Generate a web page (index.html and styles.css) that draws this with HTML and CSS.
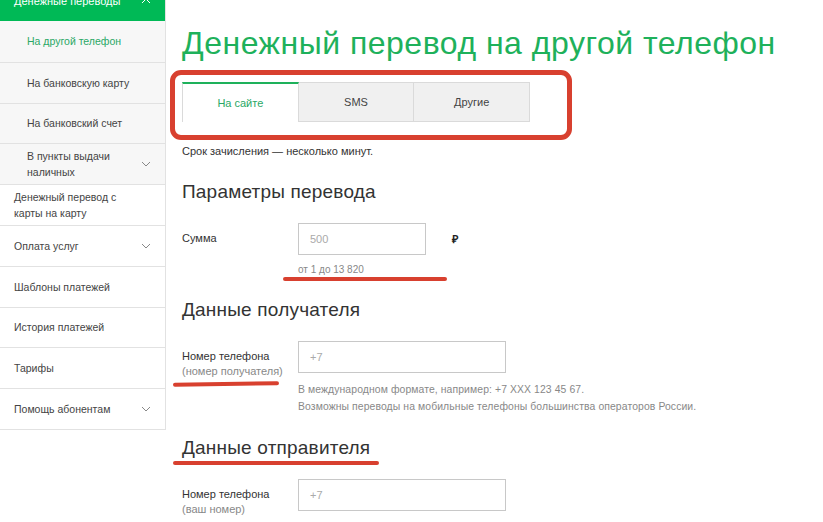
FILE: index.html
```html
<!DOCTYPE html>
<html lang="ru">
	<head>
		<meta charset="UTF-8" />
		<meta name="viewport" content="width=device-width, initial-scale=1.0" />
		<title>Денежный перевод на другой телефон</title>
		<link rel="stylesheet" href="styles.css">
	</head>
	<body>
		<div class="page">
			<nav class="sidebar">
				<div class="menu-head">
					<span>Денежные переводы</span>
					<svg class="chevron" width="10" height="6" viewBox="0 0 10 6"><polyline points="1,5 5,1 9,5" fill="none" stroke="#fff" stroke-width="1"/></svg>
				</div>
				<div class="menu-item sub active">На другой телефон</div>
				<div class="menu-item sub">На банковскую карту</div>
				<div class="menu-item sub">На банковский счет</div>
				<div class="menu-item sub">
					<span>В пункты выдачи<br>наличных</span>
					<svg class="chevron" width="10" height="6" viewBox="0 0 10 6"><polyline points="1,1 5,5 9,1" fill="none" stroke="#888" stroke-width="1"/></svg>
				</div>
				<div class="menu-item">Денежный перевод с<br>карты на карту</div>
				<div class="menu-item">
					<span>Оплата услуг</span>
					<svg class="chevron" width="10" height="6" viewBox="0 0 10 6"><polyline points="1,1 5,5 9,1" fill="none" stroke="#888" stroke-width="1"/></svg>
				</div>
				<div class="menu-item">Шаблоны платежей</div>
				<div class="menu-item">История платежей</div>
				<div class="menu-item">Тарифы</div>
				<div class="menu-item">
					<span>Помощь абонентам</span>
					<svg class="chevron" width="10" height="6" viewBox="0 0 10 6"><polyline points="1,1 5,5 9,1" fill="none" stroke="#888" stroke-width="1"/></svg>
				</div>
			</nav>

			<main class="content">
				<h1 class="title">Денежный перевод на другой телефон</h1>

				<div class="tabs">
					<div class="tab active">На сайте</div>
					<div class="tab">SMS</div>
					<div class="tab">Другие</div>
				</div>

				<p class="note">Срок зачисления — несколько минут.</p>

				<h2 class="section-title">Параметры перевода</h2>
				<div class="field">
					<div class="label">Сумма</div>
					<div class="input short">500</div>
					<div class="currency">₽</div>
				</div>
				<div class="hint mark-hint">от 1 до 13 820</div>

				<h2 class="section-title">Данные получателя</h2>
				<div class="field">
					<div class="label mark-label">Номер телефона<span class="sub-label">(номер получателя)</span></div>
					<div class="input">+7</div>
				</div>
				<div class="hint help">
					В международном формате, например: +7 XXX 123 45 67.<br>
					Возможны переводы на мобильные телефоны большинства операторов России.
				</div>

				<h2 class="section-title"><span class="mark-title">Данные отправителя</span></h2>
				<div class="field">
					<div class="label">Номер телефона<span class="sub-label">(ваш номер)</span></div>
					<div class="input">+7</div>
				</div>
			</main>
		</div>
	</body>
</html>
```

FILE: styles.css
```css
* {
	margin: 0;
	padding: 0;
	box-sizing: border-box;
	font-family: "Liberation Sans", Arial, sans-serif;
}
body {
	background: #fff;
	color: #333;
}
.page {
	display: flex;
	align-items: flex-start;
}

/* sidebar */
.sidebar {
	width: 166px;
	flex-shrink: 0;
	border-right: 1px solid #e2e2e2;
	border-bottom: 1px solid #e2e2e2;
	margin-top: -20px;
	font-size: 10.5px;
	color: #444;
}
.menu-head {
	height: 41px;
	background: #00b956;
	color: #fff;
	display: flex;
	align-items: center;
	justify-content: space-between;
	padding: 0 14px 0 14px;
	font-size: 11px;
}
.menu-item {
	height: 40.8px;
	display: flex;
	align-items: center;
	justify-content: space-between;
	padding: 0 14px 0 14px;
	line-height: 16px;
	border-top: 1px solid #e2e2e2;
	background: #fff;
}
.menu-item.sub {
	background: #f7f7f7;
	padding-left: 27px;
}
.menu-head + .menu-item {
	border-top: none;
}
.menu-item.active {
	color: #2aa866;
}
.chevron {
	flex-shrink: 0;
}

/* content */
.content {
	padding: 23px 0 10px 16px;
	flex: 1;
}
.title {
	font-weight: normal;
	font-size: 32px;
	line-height: 40px;
	color: #1eb15b;
	letter-spacing: 0.5px;
}
.tabs {
	position: relative;
	display: flex;
	margin-top: 19px;
	width: 348px;
}
.tabs::after {
	content: "";
	position: absolute;
	left: -12px;
	top: -12px;
	right: -42px;
	bottom: -18px;
	border: 5px solid #d8402f;
	border-radius: 11px;
}
.tab {
	flex: 1;
	height: 40px;
	display: flex;
	align-items: center;
	justify-content: center;
	font-size: 11px;
	color: #444;
	background: #f0f0f0;
	border: 1px solid #dadada;
	border-left: none;
}
.tab.active {
	background: #fff;
	color: #2aa866;
	border-left: 1px solid #dadada;
	border-top: 2px solid #1eb15b;
	border-bottom: none;
}
.note {
	margin-top: 21px;
	font-size: 11px;
	line-height: 16px;
	color: #333;
}
.section-title {
	font-weight: normal;
	font-size: 19px;
	line-height: 26px;
	color: #333;
	margin-top: 20px;
	letter-spacing: 0.2px;
}
.field {
	display: flex;
	align-items: flex-start;
	margin-top: 18px;
}
.label {
	width: 116px;
	font-size: 11px;
	line-height: 15px;
	padding-top: 8px;
	margin-bottom: -6px;
	color: #333;
}
.sub-label {
	display: block;
	color: #888;
}
.input {
	width: 208px;
	height: 32px;
	border: 1px solid #c8c8c8;
	padding: 0 11px;
	display: flex;
	align-items: center;
	font-size: 11px;
	color: #aaa;
}
.input.short {
	width: 128px;
}
.currency {
	margin-left: 26px;
	font-size: 11px;
	line-height: 32px;
	color: #222;
	font-weight: bold;
}
.hint {
	margin-left: 116px;
	margin-top: 8px;
	font-size: 10px;
	line-height: 14px;
	color: #888;
}
.help {
	font-size: 10.4px;
	line-height: 17px;
	margin-top: 8px;
	letter-spacing: 0.1px;
}

/* red marker annotations */
.mark-hint,
.mark-label,
.mark-title {
	position: relative;
}
.mark-hint::after,
.mark-label::after,
.mark-title::after {
	content: "";
	position: absolute;
	height: 4px;
	border-radius: 2px;
	background: #d8402f;
}
.mark-hint {
	width: max-content;
}
.mark-hint::after {
	left: -15px;
	width: 164px;
	top: 14px;
}
.mark-label::after {
	left: -9px;
	width: 106px;
	top: 41px;
	transform: rotate(-0.8deg);
}
.mark-title {
	display: inline-block;
}
.mark-title::after {
	left: -9px;
	width: 206px;
	top: 26px;
}
```
